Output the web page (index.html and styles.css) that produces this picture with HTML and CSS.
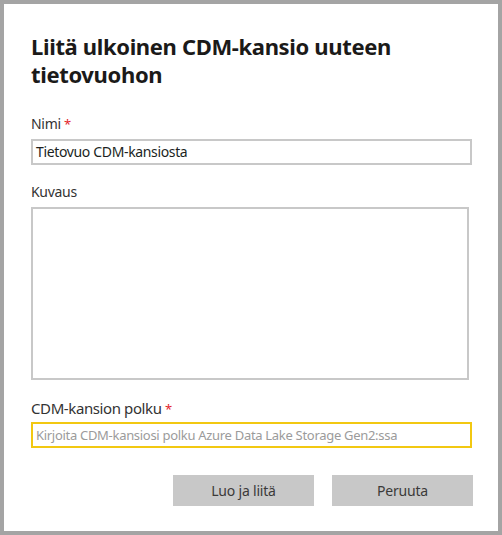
FILE: index.html
```html
<!DOCTYPE html>
<html lang="fi">
<head>
<meta charset="utf-8">
<title>Liitä ulkoinen CDM-kansio</title>
<link rel="stylesheet" href="styles.css">
</head>
<body>
<div class="dialog">
  <h1 class="title">Liitä ulkoinen CDM-kansio uuteen tietovuohon</h1>
  <label class="label label-first">Nimi <span class="req">*</span></label>
  <div class="field">Tietovuo CDM-kansiosta</div>
  <label class="label label-desc">Kuvaus</label>
  <div class="area"></div>
  <label class="label label-path">CDM-kansion polku <span class="req">*</span></label>
  <div class="field field-active placeholder">Kirjoita CDM-kansiosi polku Azure Data Lake Storage Gen2:ssa</div>
  <div class="actions">
    <button class="btn">Luo ja liitä</button>
    <button class="btn">Peruuta</button>
  </div>
</div>
</body>
</html>
```

FILE: styles.css
```css
html, body {
  margin: 0;
  padding: 0;
  background: #a4a4a4;
}
.dialog {
  box-sizing: border-box;
  width: 502px;
  height: 535px;
  border: 4px solid #a4a4a4;
  background: #ffffff;
  padding: 28px 26px 0 27px;
  font-family: "Noto Sans", "Open Sans", sans-serif;
  color: #252423;
}
.title {
  margin: 0;
  width: 400px;
  font-size: 22px;
  line-height: 28px;
  font-weight: 700;
  letter-spacing: -0.35px;
  color: #1b1a19;
}
.label {
  display: block;
  font-size: 14px;
  line-height: 20px;
  letter-spacing: -0.3px;
  color: #333333;
}
.label-first { margin-top: 26px; margin-bottom: 5px; }
.label-desc { margin-top: 17px; margin-bottom: 5px; }
.label-path { margin-top: 18px; margin-bottom: 3px; font-size: 15px; letter-spacing: -0.4px; }
.req {
  color: #e3262d;
  font-size: 13px;
}
.field {
  box-sizing: border-box;
  height: 26px;
  border: 2px solid #c8c8c8;
  padding: 0 3px;
  font-size: 14px;
  line-height: 22px;
  letter-spacing: -0.35px;
  color: #201f1e;
  white-space: nowrap;
  overflow: hidden;
}
.field-active {
  border-color: #f2c811;
}
.placeholder {
  color: #9b9b9b;
  font-size: 13px;
  letter-spacing: -0.3px;
}
.area {
  box-sizing: border-box;
  width: 438px;
  height: 173px;
  border: 2px solid #c8c8c8;
}
.actions {
  display: flex;
  justify-content: flex-end;
  gap: 18px;
  margin-top: 27px;
  margin-right: -1px;
}
.btn {
  width: 141px;
  height: 31px;
  border: none;
  background: #c8c8c8;
  font-family: "Noto Sans", "Open Sans", sans-serif;
  font-size: 14px;
  letter-spacing: -0.2px;
  color: #3b3a39;
  padding: 0;
}
```
